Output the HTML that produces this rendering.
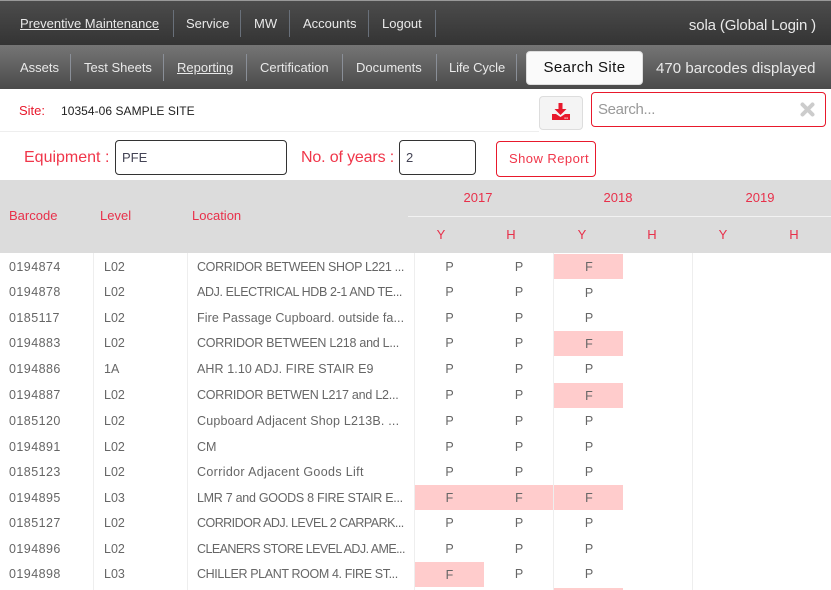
<!DOCTYPE html>
<html><head><meta charset="utf-8">
<style>
html,body{margin:0;padding:0;width:831px;height:590px;overflow:hidden;background:#fff}
body{font-family:"Liberation Sans",sans-serif;position:relative}
div,span,a{position:absolute;white-space:nowrap;box-sizing:border-box}
.top{left:0;top:0;width:831px;height:45px;background:linear-gradient(#4c4c4c,#343434);border-top:1px solid #999}
.sub{left:0;top:45px;width:831px;height:44px;background:linear-gradient(#757575,#4a4a4a)}
.n{color:#e9e9e9;font-size:13px;line-height:16px;letter-spacing:0}
.s1{top:10px;width:1px;height:27px;background:#69707a}
.s2{top:54px;width:1px;height:27px;background:#8a8f98}
.u{text-decoration:underline}
.red{color:#e8192c}
.hd{color:#e8304a;font-size:13px;line-height:16px}
.c{transform:translateX(-50%)}
.vl{top:253px;width:1px;height:337px;background:#eee}
.pk{height:25px;width:69px;background:#fcc}
.t{font-size:12.5px;line-height:16px;color:#666}
.p{font-size:12.5px;line-height:16px;color:#666;transform:translateX(-50%)}
.b{left:9px;letter-spacing:.45px}.l{left:104px}.o{left:197px}
.x1{left:449.5px}.x2{left:519px}.x3{left:589px}
.box{border:1px solid #333;border-radius:4px;background:#fff;color:#445;font-size:13px;line-height:33px;padding-left:6px}
</style></head><body>
<div class="top"></div>
<div class="sub"></div>
<a class="n u" style="left:20px;top:16px;letter-spacing:-.02px">Preventive Maintenance</a>
<div class="s1" style="left:173px"></div>
<a class="n" style="left:186px;top:16px">Service</a>
<div class="s1" style="left:240px"></div>
<a class="n" style="left:254px;top:16px">MW</a>
<div class="s1" style="left:289px"></div>
<a class="n" style="left:303px;top:16px">Accounts</a>
<div class="s1" style="left:368px"></div>
<a class="n" style="left:382px;top:16px">Logout</a>
<div class="s1" style="left:435px"></div>
<span style="right:15px;top:17px;color:#e9e9e9;font-size:15px;line-height:18px;letter-spacing:-.15px">sola (Global Login )</span>

<a class="n" style="left:20px;top:60px">Assets</a>
<div class="s2" style="left:70px"></div>
<a class="n" style="left:84px;top:60px">Test Sheets</a>
<div class="s2" style="left:163px"></div>
<a class="n u" style="left:177px;top:60px">Reporting</a>
<div class="s2" style="left:246px"></div>
<a class="n" style="left:260px;top:60px">Certification</a>
<div class="s2" style="left:342px"></div>
<a class="n" style="left:356px;top:60px">Documents</a>
<div class="s2" style="left:436px"></div>
<a class="n" style="left:449px;top:60px;letter-spacing:-.1px">Life Cycle</a>
<div class="s2" style="left:516px"></div>
<div style="left:526px;top:51px;width:117px;height:34px;background:#fafafa;border:1px solid #ddd;border-radius:4px;color:#111;font-size:15px;line-height:32px;text-align:center;letter-spacing:.4px">Search Site</div>
<span style="left:656px;top:60px;color:#e9e9e9;font-size:15px;line-height:18px;letter-spacing:.05px">470 barcodes displayed</span>

<span class="red" style="left:19px;top:103px;font-size:13px;line-height:16px">Site:</span>
<span style="left:61px;top:103px;font-size:12px;line-height:16px;color:#222;letter-spacing:.05px">10354-06 SAMPLE SITE</span>
<div style="left:0;top:131px;width:539px;height:1px;background:#eee"></div>
<div style="left:539px;top:96px;width:44px;height:34px;background:#f4f4f4;border:1px solid #ddd;border-radius:4px"></div>
<svg style="position:absolute;left:551px;top:102px" width="20" height="20" viewBox="0 0 20 20"><path d="M7.500 1h4v6h4l-6 6-6-6h4z" fill="#e8192c"/><path d="M1 12h4l4.500 3 4.500-3h5v6H1z" fill="#e8192c"/><rect x="13.500" y="15.500" width="1.200" height="1.200" fill="#fff"/><rect x="15.500" y="15.500" width="1.200" height="1.200" fill="#fff"/></svg>
<div style="left:591px;top:92px;width:235px;height:35px;border:1px solid #e8192c;border-radius:4px;background:#fff"></div>
<span style="left:598px;top:101px;font-size:15px;line-height:18px;color:#999;letter-spacing:-.33px">Search...</span>
<svg style="position:absolute;left:800px;top:102px" width="15" height="15" viewBox="0 0 15 15"><path d="M2.500 2.500L12.500 12.500M12.500 2.500L2.500 12.500" stroke="#ccc" stroke-width="4" stroke-linecap="round"/></svg>

<span style="left:24px;top:148px;font-size:16px;line-height:19px;color:#f0364a;letter-spacing:0">Equipment :</span>
<div class="box" style="left:115px;top:140px;width:172px;height:35px">PFE</div>
<span style="left:301px;top:148px;font-size:16px;line-height:19px;color:#f0364a;letter-spacing:-.15px">No. of years :</span>
<div class="box" style="left:399px;top:140px;width:77px;height:35px">2</div>
<div style="left:496px;top:141px;width:100px;height:36px;border:1px solid #e8192c;border-radius:4px;color:#f0364a;font-size:13px;line-height:34px;padding-left:12px;letter-spacing:.45px">Show Report</div>

<div style="left:0;top:180px;width:831px;height:73px;background:#dcdcdc"></div>
<div style="left:408px;top:216px;width:423px;height:1px;background:#f2f2f2"></div>
<span class="hd" style="left:9px;top:208px">Barcode</span>
<span class="hd" style="left:100px;top:208px">Level</span>
<span class="hd" style="left:192px;top:208px">Location</span>
<span class="hd c" style="left:478px;top:190px">2017</span>
<span class="hd c" style="left:618px;top:190px">2018</span>
<span class="hd c" style="left:760px;top:190px">2019</span>
<span class="hd c" style="left:441px;top:227px">Y</span>
<span class="hd c" style="left:511px;top:227px">H</span>
<span class="hd c" style="left:582px;top:227px">Y</span>
<span class="hd c" style="left:652px;top:227px">H</span>
<span class="hd c" style="left:723px;top:227px">Y</span>
<span class="hd c" style="left:794px;top:227px">H</span>

<div class="pk" style="left:554px;top:254px"></div>
<div class="pk" style="left:554px;top:331px"></div>
<div class="pk" style="left:554px;top:383px"></div>
<div class="pk" style="left:415px;top:485px"></div>
<div class="pk" style="left:484px;top:485px"></div>
<div class="pk" style="left:554px;top:485px"></div>
<div class="pk" style="left:415px;top:562px"></div>
<div class="pk" style="left:554px;top:588px"></div>

<div class="vl" style="left:93px"></div>
<div class="vl" style="left:187px"></div>
<div class="vl" style="left:414px"></div>
<div class="vl" style="left:553px"></div>
<div class="vl" style="left:692px"></div>

<span class="t b" style="top:259px">0194874</span><span class="t l" style="top:259px">L02</span><span class="t o" style="top:259px;letter-spacing:-.34px">CORRIDOR BETWEEN SHOP L221 ...</span><span class="p x1" style="top:259px">P</span><span class="p x2" style="top:259px">P</span><span class="p x3" style="top:259px">F</span>
<span class="t b" style="top:284px">0194878</span><span class="t l" style="top:284px">L02</span><span class="t o" style="top:284px;letter-spacing:-.376px">ADJ. ELECTRICAL HDB 2-1 AND TE...</span><span class="p x1" style="top:284px">P</span><span class="p x2" style="top:284px">P</span><span class="p x3" style="top:285px">P</span>
<span class="t b" style="top:310px">0185117</span><span class="t l" style="top:310px">L02</span><span class="t o" style="top:310px;letter-spacing:.1px">Fire Passage Cupboard. outside fa...</span><span class="p x1" style="top:310px">P</span><span class="p x2" style="top:310px">P</span><span class="p x3" style="top:310px">P</span>
<span class="t b" style="top:335px">0194883</span><span class="t l" style="top:335px">L02</span><span class="t o" style="top:335px;letter-spacing:-.26px">CORRIDOR BETWEEN L218 and L...</span><span class="p x1" style="top:335px">P</span><span class="p x2" style="top:335px">P</span><span class="p x3" style="top:336px">F</span>
<span class="t b" style="top:361px">0194886</span><span class="t l" style="top:361px">1A</span><span class="t o" style="top:361px;letter-spacing:.09px">AHR 1.10 ADJ. FIRE STAIR E9</span><span class="p x1" style="top:361px">P</span><span class="p x2" style="top:361px">P</span><span class="p x3" style="top:361px">P</span>
<span class="t b" style="top:387px">0194887</span><span class="t l" style="top:387px">L02</span><span class="t o" style="top:387px;letter-spacing:-.23px">CORRIDOR BETWEN L217 and L2...</span><span class="p x1" style="top:387px">P</span><span class="p x2" style="top:387px">P</span><span class="p x3" style="top:388px">F</span>
<span class="t b" style="top:413px">0185120</span><span class="t l" style="top:413px">L02</span><span class="t o" style="top:413px;letter-spacing:.19px">Cupboard Adjacent Shop L213B. ...</span><span class="p x1" style="top:413px">P</span><span class="p x2" style="top:413px">P</span><span class="p x3" style="top:413px">P</span>
<span class="t b" style="top:439px">0194891</span><span class="t l" style="top:439px">L02</span><span class="t o" style="top:439px">CM</span><span class="p x1" style="top:439px">P</span><span class="p x2" style="top:439px">P</span><span class="p x3" style="top:439px">P</span>
<span class="t b" style="top:464px">0185123</span><span class="t l" style="top:464px">L02</span><span class="t o" style="top:464px;letter-spacing:.35px">Corridor Adjacent Goods Lift</span><span class="p x1" style="top:464px">P</span><span class="p x2" style="top:464px">P</span><span class="p x3" style="top:464px">P</span>
<span class="t b" style="top:490px">0194895</span><span class="t l" style="top:490px">L03</span><span class="t o" style="top:490px;letter-spacing:-.28px">LMR 7 and GOODS 8 FIRE STAIR E...</span><span class="p x1" style="top:490px">F</span><span class="p x2" style="top:490px">F</span><span class="p x3" style="top:490px">F</span>
<span class="t b" style="top:515px">0185127</span><span class="t l" style="top:515px">L02</span><span class="t o" style="top:515px;letter-spacing:-.53px">CORRIDOR ADJ. LEVEL 2 CARPARK...</span><span class="p x1" style="top:515px">P</span><span class="p x2" style="top:515px">P</span><span class="p x3" style="top:515px">P</span>
<span class="t b" style="top:541px">0194896</span><span class="t l" style="top:541px">L02</span><span class="t o" style="top:541px;letter-spacing:-.56px">CLEANERS STORE LEVEL ADJ. AME...</span><span class="p x1" style="top:541px">P</span><span class="p x2" style="top:541px">P</span><span class="p x3" style="top:541px">P</span>
<span class="t b" style="top:566px">0194898</span><span class="t l" style="top:566px">L03</span><span class="t o" style="top:566px;letter-spacing:-.38px">CHILLER PLANT ROOM 4. FIRE ST...</span><span class="p x1" style="top:567px">F</span><span class="p x2" style="top:566px">P</span><span class="p x3" style="top:566px">P</span>
</body></html>
